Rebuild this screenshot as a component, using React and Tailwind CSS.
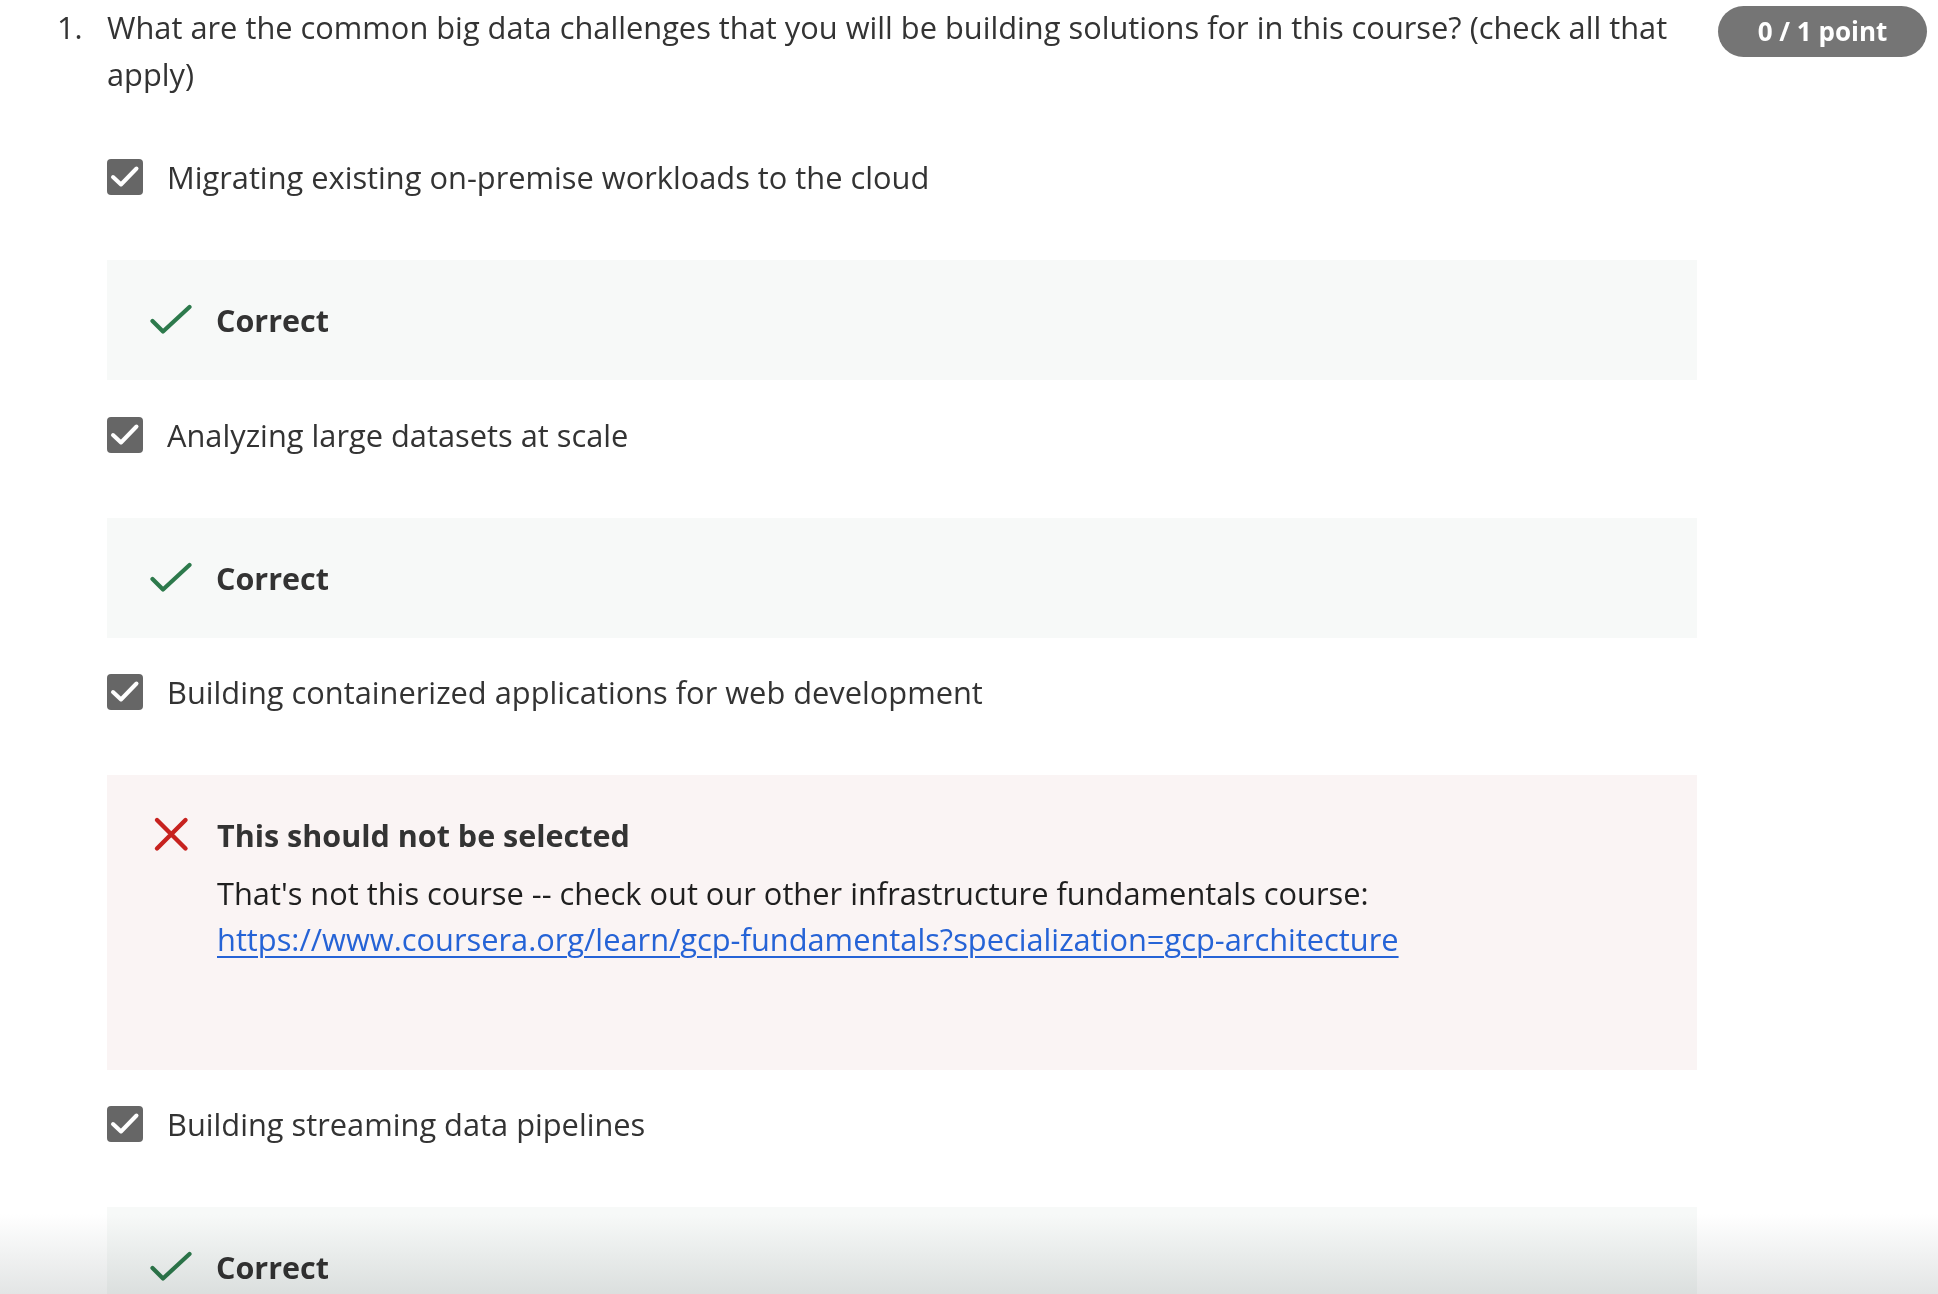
import React from "react";

const font = { fontFamily: '"Open Sans", "Liberation Sans", sans-serif' };

function CheckBox() {
  return (
    <div className="w-[36px] h-[36px] rounded-[4px] bg-[#666666] flex items-center justify-center shrink-0">
      <svg width="36" height="36" viewBox="0 0 36 36" fill="none">
        <path d="M6 18 L14 25.5 L29.5 9.5" stroke="white" strokeWidth="4" strokeLinecap="round" strokeLinejoin="round" />
      </svg>
    </div>
  );
}

function Option({ label, className = "" }) {
  return (
    <div className={`flex items-center gap-[24px] h-[44px] ${className}`}>
      <CheckBox />
      <span className="text-[30.8px] leading-[44px] text-[#333333]">{label}</span>
    </div>
  );
}

function Correct() {
  return (
    <div className="mt-[61px] bg-[#f7f9f8] py-[38px] pl-[43px] flex items-center gap-[24px]">
      <svg width="42" height="32" viewBox="0 0 42 32" fill="none" className="shrink-0">
        <path d="M2.5 17 L13 27.5 L39.5 3" stroke="#2d7a4c" strokeWidth="4.2" strokeLinecap="round" strokeLinejoin="round" />
      </svg>
      <span className="text-[30.5px] leading-[44px] font-bold text-[#333333]">Correct</span>
    </div>
  );
}

function Wrong() {
  return (
    <div className="mt-[61px] bg-[#faf4f4] pt-[38px] pb-[108px] pl-[46px] flex gap-[28px]">
      <svg width="36" height="36" viewBox="0 0 36 36" fill="none" className="shrink-0 mt-[3px]">
        <path d="M4 4 L32.5 32.5 M32.5 4 L4 32.5" stroke="#c7221f" strokeWidth="4.4" strokeLinecap="round" />
      </svg>
      <div className="flex flex-col">
        <span className="text-[30.5px] leading-[44px] font-bold text-[#333333]">This should not be selected</span>
        <p className="mt-[13px] text-[30.8px] leading-[46px] text-[#1f1f1f]">
          That's not this course -- check out our other infrastructure fundamentals course:
          <br />
          <a href="#" className="text-[#2563d6] underline underline-offset-[5px] decoration-[2px]">
            https://www.coursera.org/learn/gcp-fundamentals?specialization=gcp-architecture
          </a>
        </p>
      </div>
    </div>
  );
}

export default function App() {
  return (
    <div className="relative h-screen overflow-hidden bg-white" style={font}>
      <div className="flex items-start pt-[4px]">
        <div className="w-[1697px] flex">
          <span className="w-[50px] pl-[57px] box-content shrink-0 text-[30.8px] leading-[47px] text-[#333333]">1.</span>
          <div className="flex-1 flex flex-col">
            <p className="text-[30.8px] leading-[47px] text-[#333333]">
              What are the common big data challenges that you will be building solutions for in this course? (check all that apply)
            </p>
            <Option className="mt-[57px]" label="Migrating existing on-premise workloads to the cloud" />
            <Correct />
            <Option className="mt-[33px]" label="Analyzing large datasets at scale" />
            <Correct />
            <Option className="mt-[32px]" label="Building containerized applications for web development" />
            <Wrong />
            <Option className="mt-[32px]" label="Building streaming data pipelines" />
            <Correct />
          </div>
        </div>
        <div className="ml-[21px] mt-[2px] w-[209px] h-[51px] rounded-full bg-[#757575] flex items-center justify-center">
          <span className="text-[26px] font-bold text-white">0 / 1 point</span>
        </div>
      </div>
      <div className="absolute left-0 right-0 bottom-0 h-[80px] bg-linear-to-b from-[#ffffff] to-[#e3e5e5] mix-blend-multiply pointer-events-none" />
    </div>
  );
}
